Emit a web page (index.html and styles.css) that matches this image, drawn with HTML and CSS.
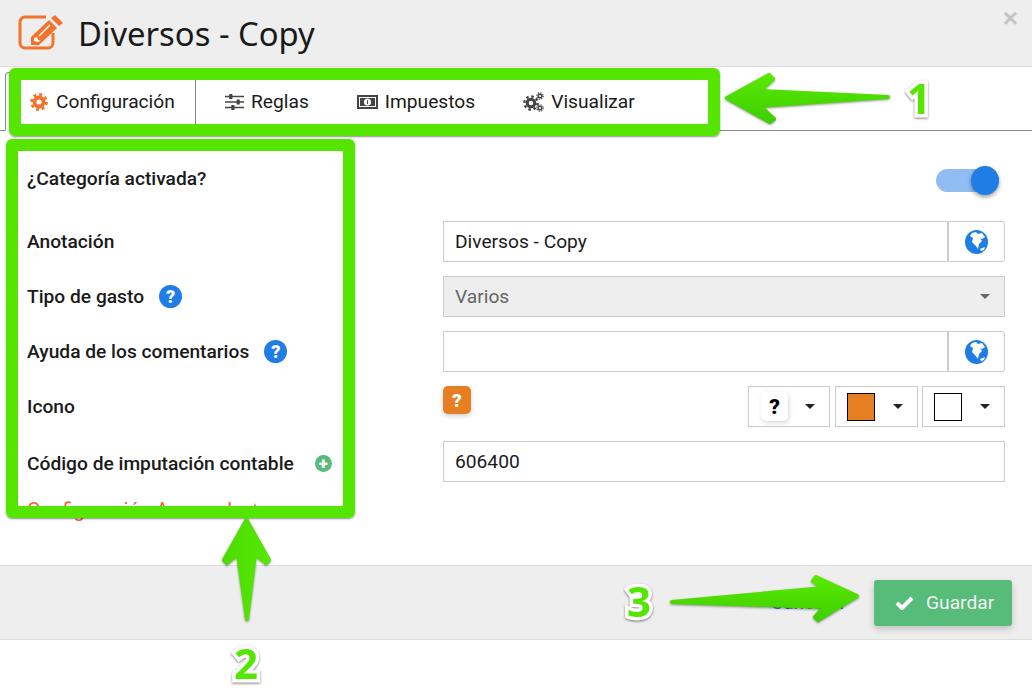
FILE: index.html
```html
<!DOCTYPE html>
<html>
  <head>
    <title>Diversos - Copy</title>
    <link rel="stylesheet" href="styles.css">
  </head>
  <body>
    <div class="modal">
      <div class="modal-header">
        <svg class="title-icon" width="46" height="37" viewBox="0 0 46 37">
          <path d="M28 3H7a5 5 0 0 0-5 5V29a5 5 0 0 0 5 5H30a5 5 0 0 0 5-5V19" fill="none" stroke="#f4722b" stroke-width="3"/>
          <path d="M13 31V23L31 6L39 14L21 31Z" fill="#f4722b"/>
          <path d="M33 4L37 1L45 9L41 12Z" fill="#f4722b"/>
          <path d="M16 27V24L19 23L20 26L23 27L20 28Z" fill="#fff"/>
          <path d="M21 22L32 11" stroke="#fff" stroke-width="1.5"/>
        </svg>
        <h1 class="title">Diversos - Copy</h1>
        <span class="close">×</span>
      </div>

      <div class="tabs">
        <div class="tab active">
          <svg class="tab-icon gear" width="18" height="18" viewBox="0 0 16 16">
            <circle cx="8" cy="8" r="4" fill="none" stroke="#f4722b" stroke-width="3.4"/>
            <circle cx="8" cy="8" r="6.6" fill="none" stroke="#f4722b" stroke-width="2.6" stroke-dasharray="2.6 2.58"/>
          </svg>
          Configuración
        </div>
        <div class="tab">
          <svg class="tab-icon" width="19" height="18" viewBox="0 0 18 18" preserveAspectRatio="none">
            <path d="M0 3.500H18M0 9H18M0 14.500H18" stroke="#444" stroke-width="1.500"/>
            <rect x="4" y="1" width="3" height="5" fill="#444"/>
            <rect x="11" y="6.500" width="3" height="5" fill="#444"/>
            <rect x="6" y="12" width="3" height="5" fill="#444"/>
          </svg>
          Reglas
        </div>
        <div class="tab">
          <svg class="tab-icon" width="21" height="16" viewBox="0 0 21 16">
            <rect x="1" y="2" width="19" height="12" fill="#fff" stroke="#444" stroke-width="2"/>
            <path d="M3 4H18V12H3Z" fill="#444"/>
            <circle cx="10.500" cy="8" r="3.600" fill="#fff"/>
            <path d="M10 6.200H11V10H10Z" fill="#444"/>
          </svg>
          Impuestos
        </div>
        <div class="tab">
          <svg class="tab-icon" width="21" height="20" viewBox="0 0 21 20">
            <circle cx="8" cy="11" r="3.800" fill="none" stroke="#444" stroke-width="3"/>
            <circle cx="8" cy="11" r="6.600" fill="none" stroke="#444" stroke-width="2.400" stroke-dasharray="2.6 2.58"/>
            <circle cx="17" cy="4" r="1.800" fill="none" stroke="#444" stroke-width="1.400"/>
            <circle cx="17" cy="4" r="3.200" fill="none" stroke="#444" stroke-width="1.200" stroke-dasharray="1.26 1.25"/>
            <circle cx="17" cy="16" r="1.800" fill="none" stroke="#444" stroke-width="1.400"/>
            <circle cx="17" cy="16" r="3.200" fill="none" stroke="#444" stroke-width="1.200" stroke-dasharray="1.26 1.25"/>
          </svg>
          Visualizar
        </div>
      </div>

      <div class="modal-body">
        <div class="row first">
          <div class="row-label">¿Categoría activada?</div>
          <div class="row-field toggle-field">
            <div class="toggle"><span class="toggle-thumb"></span></div>
          </div>
        </div>

        <div class="row">
          <div class="row-label">Anotación</div>
          <div class="row-field input-group">
            <div class="input">Diversos - Copy</div>
            <div class="globe-btn">
              <svg width="23" height="24" viewBox="0 0 23 24">
                <ellipse cx="11.500" cy="12" rx="11.500" ry="12" fill="#1f7de6"/>
                <path d="M7 3L11 2L13 4L17 3L20 7L17 9L15 8L17 11L14 14L13 19L10 15L7 12L8 8L5 6Z" fill="#fff"/>
                <path d="M15 19L20 17L19 20L16 21Z" fill="#fff"/>
              </svg>
            </div>
          </div>
        </div>

        <div class="row">
          <div class="row-label">Tipo de gasto <span class="help">?</span></div>
          <div class="row-field select">Varios <span class="caret gray"></span></div>
        </div>

        <div class="row">
          <div class="row-label">Ayuda de los comentarios <span class="help">?</span></div>
          <div class="row-field input-group">
            <div class="input"></div>
            <div class="globe-btn">
              <svg width="23" height="24" viewBox="0 0 23 24">
                <ellipse cx="11.500" cy="12" rx="11.500" ry="12" fill="#1f7de6"/>
                <path d="M7 3L11 2L13 4L17 3L20 7L17 9L15 8L17 11L14 14L13 19L10 15L7 12L8 8L5 6Z" fill="#fff"/>
                <path d="M15 19L20 17L19 20L16 21Z" fill="#fff"/>
              </svg>
            </div>
          </div>
        </div>

        <div class="row">
          <div class="row-label">Icono</div>
          <div class="row-field icon-field">
            <div class="icon-preview">?</div>
            <div class="picker first-picker">
              <span class="picker-glyph">?</span>
              <span class="caret"></span>
            </div>
            <div class="picker">
              <span class="swatch orange"></span>
              <span class="caret"></span>
            </div>
            <div class="picker">
              <span class="swatch"></span>
              <span class="caret"></span>
            </div>
          </div>
        </div>

        <div class="row">
          <div class="row-label low">
            Código de imputación contable
            <span class="plus">+</span>
          </div>
          <div class="row-field input">606400</div>
        </div>

        <div class="section-title">Configuración Avanzada <span class="caret-up"></span></div>
      </div>

      <div class="modal-footer">
        <a class="cancel">Cancelar</a>
        <div class="save-btn">
          <svg width="19" height="15" viewBox="0 0 19 15">
            <path d="M2 8L7 13L17 3" fill="none" stroke="#fff" stroke-width="4"/>
          </svg>
          Guardar
        </div>
      </div>
    </div>

    <!-- tutorial marks drawn over the screenshot -->
    <div class="mark mark-tabs"></div>
    <div class="mark mark-labels"></div>
    <svg class="arrows" width="1033" height="696" viewBox="0 0 1033 696">
      <defs>
        <linearGradient id="arrow-h" x1="0" y1="0" x2="0" y2="1">
          <stop offset="0" stop-color="#58ea00"/>
          <stop offset="1" stop-color="#3fce00"/>
        </linearGradient>
        <linearGradient id="arrow-v" x1="0" y1="0" x2="1" y2="0">
          <stop offset="0" stop-color="#4cdc00"/>
          <stop offset="1" stop-color="#56e800"/>
        </linearGradient>
      </defs>
      <path class="arrow" fill="url(#arrow-h)" stroke="url(#arrow-h)" d="M727 98L769 75L773 79L760 91L888 97L760 106L774 119L770 122Z"/>
      <path class="arrow" fill="url(#arrow-v)" stroke="url(#arrow-v)" d="M246.500 520L269 560L266 563L255 554L247 619L238 554L227 563L224 560Z"/>
      <path class="arrow" fill="url(#arrow-h)" stroke="url(#arrow-h)" d="M857 596L816 577L813 581L824 588L672 602L824 607L815 617L818 620Z"/>
    </svg>
    <span class="num num-1">1</span>
    <span class="num num-2">2</span>
    <span class="num num-3">3</span>
  </body>
</html>
```

FILE: styles.css
```css
* {
  box-sizing: border-box;
}
body {
  margin: 0;
  height: 696px;
  overflow: hidden;
  background: #fff;
  font-family: Roboto, sans-serif;
  font-size: 19.2px;
  color: #1a1a1a;
}
.modal {
  width: 1032px;
}

/* header */
.modal-header {
  height: 67px;
  display: flex;
  align-items: center;
  padding: 0 14px 0 18px;
  background: #eee;
  border-bottom: 1px solid #ddd;
}
.title-icon {
  margin-top: -2px;
}
.title {
  margin: 1px 0 0 14px;
  font-family: "Noto Sans", sans-serif;
  font-size: 32.800px;
  font-weight: 400;
  color: #1a1a1a;
}
.close {
  margin-left: auto;
  align-self: flex-start;
  margin-top: 3px;
  font-family: "Liberation Sans", sans-serif;
  font-size: 26px;
  font-weight: 700;
  color: #c4c4c4;
}

/* tabs */
.tabs {
  height: 64px;
  display: flex;
  align-items: flex-end;
  padding-left: 5px;
  border-bottom: 1px solid #888;
}
.tab {
  height: 59px;
  display: flex;
  align-items: center;
  gap: 7px;
  padding: 0 24px;
  margin-bottom: -1px;
}
.tab.active {
  width: 191px;
  gap: 8px;
  background: #fff;
  border: 1px solid #888;
  border-bottom: 1px solid #fff;
  border-radius: 4px 4px 0 0;
  padding: 0 0 0 24px;
  margin-right: 5px;
}
.tab-icon {
  flex: none;
}

/* form */
.modal-body {
  height: 434px;
  overflow: hidden;
  padding: 27px 27px 0;
}
.row {
  display: flex;
  margin-bottom: 14px;
}
.row.first {
  margin-bottom: 22px;
}
.row-label {
  width: 416px;
  flex: none;
  height: 41px;
  display: flex;
  align-items: center;
  font-weight: 500;
}
.row-label.low {
  padding-top: 4px;
}
.row-field {
  flex: 1;
  height: 41px;
}
.input-group {
  display: flex;
}
.input {
  flex: 1;
  height: 41px;
  display: flex;
  align-items: center;
  padding: 0 11px;
  border: 1px solid #ccc;
  background: #fff;
}
.globe-btn {
  width: 57px;
  display: flex;
  align-items: center;
  justify-content: center;
  border: 1px solid #ccc;
  border-radius: 0 3px 3px 0;
}
.select {
  display: flex;
  align-items: center;
  justify-content: space-between;
  padding: 0 14px 0 11px;
  border: 1px solid #ccc;
  background: #eee;
  color: #666;
}
.caret {
  width: 0;
  height: 0;
  border-left: 5.500px solid transparent;
  border-right: 5.500px solid transparent;
  border-top: 5.500px solid #222;
}
.caret.gray {
  border-top-color: #666;
}
.help {
  width: 23px;
  height: 23px;
  margin-left: 15px;
  display: flex;
  align-items: center;
  justify-content: center;
  border-radius: 50%;
  background: #1f7de6;
  color: #fff;
  font-size: 18px;
  font-weight: 900;
}
.plus {
  width: 17px;
  height: 17px;
  margin-left: 21px;
  display: flex;
  align-items: center;
  justify-content: center;
  border-radius: 50%;
  background: #57bb7a;
  color: #fff;
  font-size: 17px;
  font-weight: 900;
  line-height: 1;
}

/* toggle */
.toggle-field {
  display: flex;
  justify-content: flex-end;
  align-items: center;
  padding: 3px 6px 0 0;
}
.toggle {
  position: relative;
  width: 63px;
  height: 23px;
  border-radius: 12px;
  background: #90bdf2;
}
.toggle-thumb {
  position: absolute;
  right: 0;
  top: -3px;
  width: 28px;
  height: 29px;
  border-radius: 50%;
  background: #1f7de6;
  box-shadow: 0 2px 4px rgba(0, 0, 0, 0.4);
}

/* icon pickers */
.icon-field {
  display: flex;
  gap: 4px;
}
.icon-preview {
  width: 28px;
  height: 28px;
  margin-right: auto;
  display: flex;
  align-items: center;
  justify-content: center;
  border-radius: 5px;
  background: #e67e22;
  box-shadow: 0 2px 5px rgba(0, 0, 0, 0.2);
  color: #fff;
  font-weight: 900;
}
.picker {
  width: 83px;
  height: 41px;
  display: flex;
  align-items: center;
  justify-content: space-between;
  padding: 0 14px 0 11px;
  border: 1px solid #ccc;
}
.first-picker {
  width: 82px;
  margin-right: 1px;
  padding-left: 12px;
}
.picker-glyph {
  width: 27px;
  height: 29px;
  display: flex;
  align-items: center;
  justify-content: center;
  border-radius: 5px;
  background: #fff;
  box-shadow: 1px 2px 5px rgba(0, 0, 0, 0.15);
  color: #000;
  font-size: 21px;
  font-weight: 900;
}
.swatch {
  width: 28px;
  height: 28px;
  background: #fff;
  border: 1px solid #000;
}
.swatch.orange {
  background: #e67e22;
}
.section-title {
  margin-top: 16px;
  font-size: 20px;
  color: #f4622b;
}
.caret-up {
  display: inline-block;
  margin-left: 2px;
  width: 0;
  height: 0;
  border-left: 5px solid transparent;
  border-right: 5px solid transparent;
  border-bottom: 14px solid #f4622b;
}

/* footer */
.modal-footer {
  height: 75px;
  display: flex;
  align-items: center;
  justify-content: flex-end;
  gap: 28px;
  padding-right: 20px;
  background: #eee;
  border-top: 1px solid #ddd;
  border-bottom: 1px solid #ddd;
}
.cancel {
  color: #1f6fd0;
}
.save-btn {
  width: 138px;
  height: 46px;
  display: flex;
  align-items: center;
  gap: 12px;
  padding-left: 21px;
  border-radius: 3px;
  background: #57bb7a;
  box-shadow: 0 3px 7px rgba(0, 0, 0, 0.2);
  color: #f2f2f2;
}

/* tutorial marks */
.mark {
  position: absolute;
  border: 12px solid #55e600;
  border-radius: 6px;
  box-shadow: 0 1px 2px rgba(0, 0, 0, 0.45);
}
.mark-tabs {
  left: 9px;
  top: 68px;
  width: 711px;
  height: 68px;
}
.mark-labels {
  left: 6px;
  top: 139px;
  width: 349px;
  height: 379px;
}
.arrows {
  position: absolute;
  left: 0;
  top: 0;
}
.arrow {
  stroke-width: 4;
  stroke-linejoin: round;
  filter: drop-shadow(0 1px 1px rgba(0, 0, 0, 0.4));
}
.num {
  position: absolute;
  font-family: "Open Sans", sans-serif;
  font-size: 42px;
  font-weight: 700;
  line-height: 1;
  color: #55e600;
  -webkit-text-stroke: 7px #fff;
  paint-order: stroke fill;
  filter: drop-shadow(0 1px 1px rgba(0, 0, 0, 0.5));
}
.num-1 {
  left: 907px;
  top: 77px;
}
.num-2 {
  left: 234px;
  top: 642px;
}
.num-3 {
  left: 627px;
  top: 580px;
}
```
